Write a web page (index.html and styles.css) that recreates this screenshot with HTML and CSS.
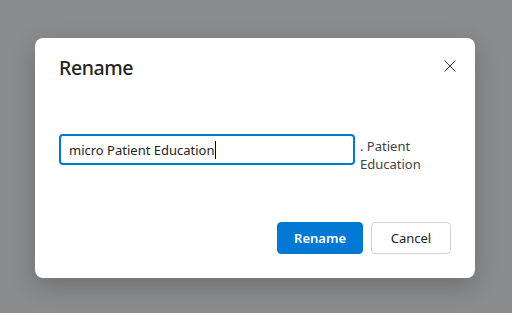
FILE: index.html
```html
<!DOCTYPE html>
<html>
<head>
<meta charset="utf-8">
<link rel="stylesheet" href="styles.css">
</head>
<body>
<div class="overlay">
  <div class="dialog">
    <div class="header">
      <h1 class="title">Rename</h1>
      <button class="close" aria-label="Close">
        <svg width="12" height="12" viewBox="0 0 12 12"><path d="M0.5 0.5L11.5 11.5M11.5 0.5L0.5 11.5" stroke="#333" stroke-width="1" fill="none"/></svg>
      </button>
    </div>
    <div class="content">
      <div class="field"><span class="value">micro Patient Education</span><span class="caret"></span></div>
      <div class="suffix">. Patient Education</div>
    </div>
    <div class="footer">
      <button class="btn primary">Rename</button>
      <button class="btn secondary">Cancel</button>
    </div>
  </div>
</div>
</body>
</html>
```
FILE: styles.css
```css
html, body {
  margin: 0;
  padding: 0;
}
body {
  background: #8a8b8c;
  font-family: "Noto Sans", "Open Sans", sans-serif;
  color: #242424;
}
.overlay {
  height: 313px;
  box-sizing: border-box;
  padding: 38px 0 0 35px;
  display: flex;
  justify-content: flex-start;
  align-items: flex-start;
}
.dialog {
  width: 440px;
  height: 240px;
  box-sizing: border-box;
  padding: 16px 24px 24px;
  background: #fff;
  border-radius: 8px;
  box-shadow: 0 8px 24px rgba(0,0,0,0.2);
  display: flex;
  flex-direction: column;
}
.header {
  display: flex;
  justify-content: space-between;
  align-items: flex-start;
}
.title {
  margin: 0;
  font-size: 19.5px;
  font-weight: 500;
  line-height: 28px;
  letter-spacing: -0.4px;
}
.close {
  width: 20px;
  height: 20px;
  margin: 2px -9px 0 0;
  padding: 0;
  border: 0;
  background: transparent;
  display: flex;
  align-items: center;
  justify-content: center;
}
.content {
  margin-top: 52px;
  display: flex;
  align-items: flex-start;
}
.field {
  width: 296px;
  height: 31px;
  box-sizing: border-box;
  border: 2px solid #0078d4;
  border-radius: 4px;
  padding: 0 8px;
  display: flex;
  align-items: center;
  font-size: 13px;
  flex-shrink: 0;
}
.caret {
  display: inline-block;
  width: 1px;
  height: 18px;
  background: #000;
  margin-left: 1px;
}
.suffix {
  margin-left: 5px;
  margin-top: 3px;
  font-size: 13px;
  line-height: 18px;
  color: #424242;
}
.footer {
  margin-top: auto;
  display: flex;
  justify-content: flex-end;
  gap: 8px;
}
.btn {
  height: 32px;
  min-width: 80px;
  padding: 0 16px;
  border-radius: 4px;
  font-family: inherit;
  font-size: 13px;
}
.primary {
  background: #0078d4;
  color: #fff;
  border: 1px solid #0078d4;
  font-weight: 600;
}
.secondary {
  background: #fff;
  color: #242424;
  border: 1px solid #d1d1d1;
}
```
